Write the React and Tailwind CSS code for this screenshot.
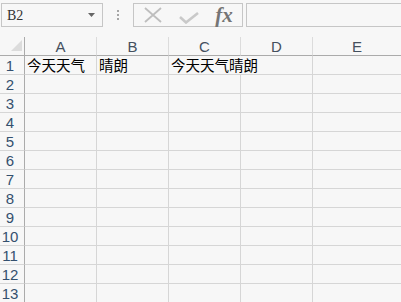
import React from "react";

const cols = ["A", "B", "C", "D", "E"];
const rows = [1, 2, 3, 4, 5, 6, 7, 8, 9, 10, 11, 12, 13];

const cellFont = { fontFamily: '"Noto Sans CJK SC", "Liberation Sans", sans-serif' };
const headFont = { fontFamily: '"Liberation Sans", "Noto Sans", sans-serif' };

const Cell = ({ children, last, span }) => (
  <div
    className={`h-[19px] border-b border-[#d6d6d6] ${last ? "" : "border-r"} ${
      span ? "col-span-2" : ""
    } overflow-visible whitespace-nowrap pl-[2px] text-[14.5px] leading-[18px] text-black`}
    style={cellFont}
  >
    {children}
  </div>
);

const App = () => {
  return (
    <div className="w-[401px] h-[302px] overflow-hidden bg-[#f7f7f7] select-none">
      {/* formula bar */}
      <div className="h-[37px] flex items-start pt-[3px]">
        <div className="ml-[1px] w-[102px] h-[24px] border border-[#c6c6c6] flex items-center justify-between pl-[5px] pr-[7px]">
          <span
            className="text-[14px] text-[#333]"
            style={{ fontFamily: '"Liberation Serif", "DejaVu Serif", serif' }}
          >
            B2
          </span>
          <svg width="7" height="4" viewBox="0 0 7 4">
            <path d="M0 0 H7 L3.5 4 Z" fill="#666" />
          </svg>
        </div>
        <div className="w-[30px] h-[24px] flex flex-col items-center justify-center gap-[2px]">
          <span className="w-[2px] h-[2px] bg-[#a6a6a6]" />
          <span className="w-[2px] h-[2px] bg-[#a6a6a6]" />
          <span className="w-[2px] h-[2px] bg-[#a6a6a6]" />
        </div>
        <div className="w-[110px] h-[24px] border border-[#c6c6c6] flex items-center">
          <div className="w-[38px] flex justify-center">
            <svg width="18" height="16" viewBox="0 0 18 16">
              <path d="M1 1 L17 15 M17 1 L1 15" stroke="#bebebe" strokeWidth="1.8" fill="none" />
            </svg>
          </div>
          <div className="w-[34px] flex justify-center pt-[6px]">
            <svg width="20" height="12" viewBox="0 0 20 12">
              <path d="M1 5 L7 10.5 L19 1" stroke="#c9c9c9" strokeWidth="2.6" fill="none" />
            </svg>
          </div>
          <div
            className="w-[36px] flex justify-center text-[21px] italic font-semibold text-[#757575] leading-none"
            style={{ fontFamily: '"Liberation Serif", serif' }}
          >
            fx
          </div>
        </div>
        <div className="ml-[3px] flex-1 h-[24px] border border-[#c6c6c6] border-r-0" />
      </div>

      {/* grid */}
      <div className="grid grid-cols-[25px_72px_72px_72px_72px_1fr]">
        <div className="h-[19px] border-b border-r border-[#ababab] relative">
          <svg className="absolute left-[11px] top-[3px]" width="11" height="11" viewBox="0 0 11 11">
            <path d="M11 0 V11 H0 Z" fill="#dcdcdc" />
          </svg>
        </div>
        {cols.map((c, i) => (
          <div
            key={c}
            className={`h-[19px] border-b border-b-[#ababab] ${
              i < 4 ? "border-r border-r-[#dcdcdc]" : ""
            } flex items-center justify-center text-[15px] leading-none text-[#44505e]`}
            style={headFont}
          >
            {c}
          </div>
        ))}

        {rows.map((r) => (
          <React.Fragment key={r}>
            <div
              className="h-[19px] border-b border-b-[#d6d6d6] border-r border-r-[#ababab] flex items-center justify-center pr-[4px] text-[15px] leading-none text-[#34506e]"
              style={headFont}
            >
              {r}
            </div>
            {r === 1 ? (
              <>
                <Cell>今天天气</Cell>
                <Cell>晴朗</Cell>
                <Cell span>今天天气晴朗</Cell>
                <Cell last />
              </>
            ) : (
              <>
                <Cell />
                <Cell />
                <Cell />
                <Cell />
                <Cell last />
              </>
            )}
          </React.Fragment>
        ))}
      </div>
    </div>
  );
};

export default App;
